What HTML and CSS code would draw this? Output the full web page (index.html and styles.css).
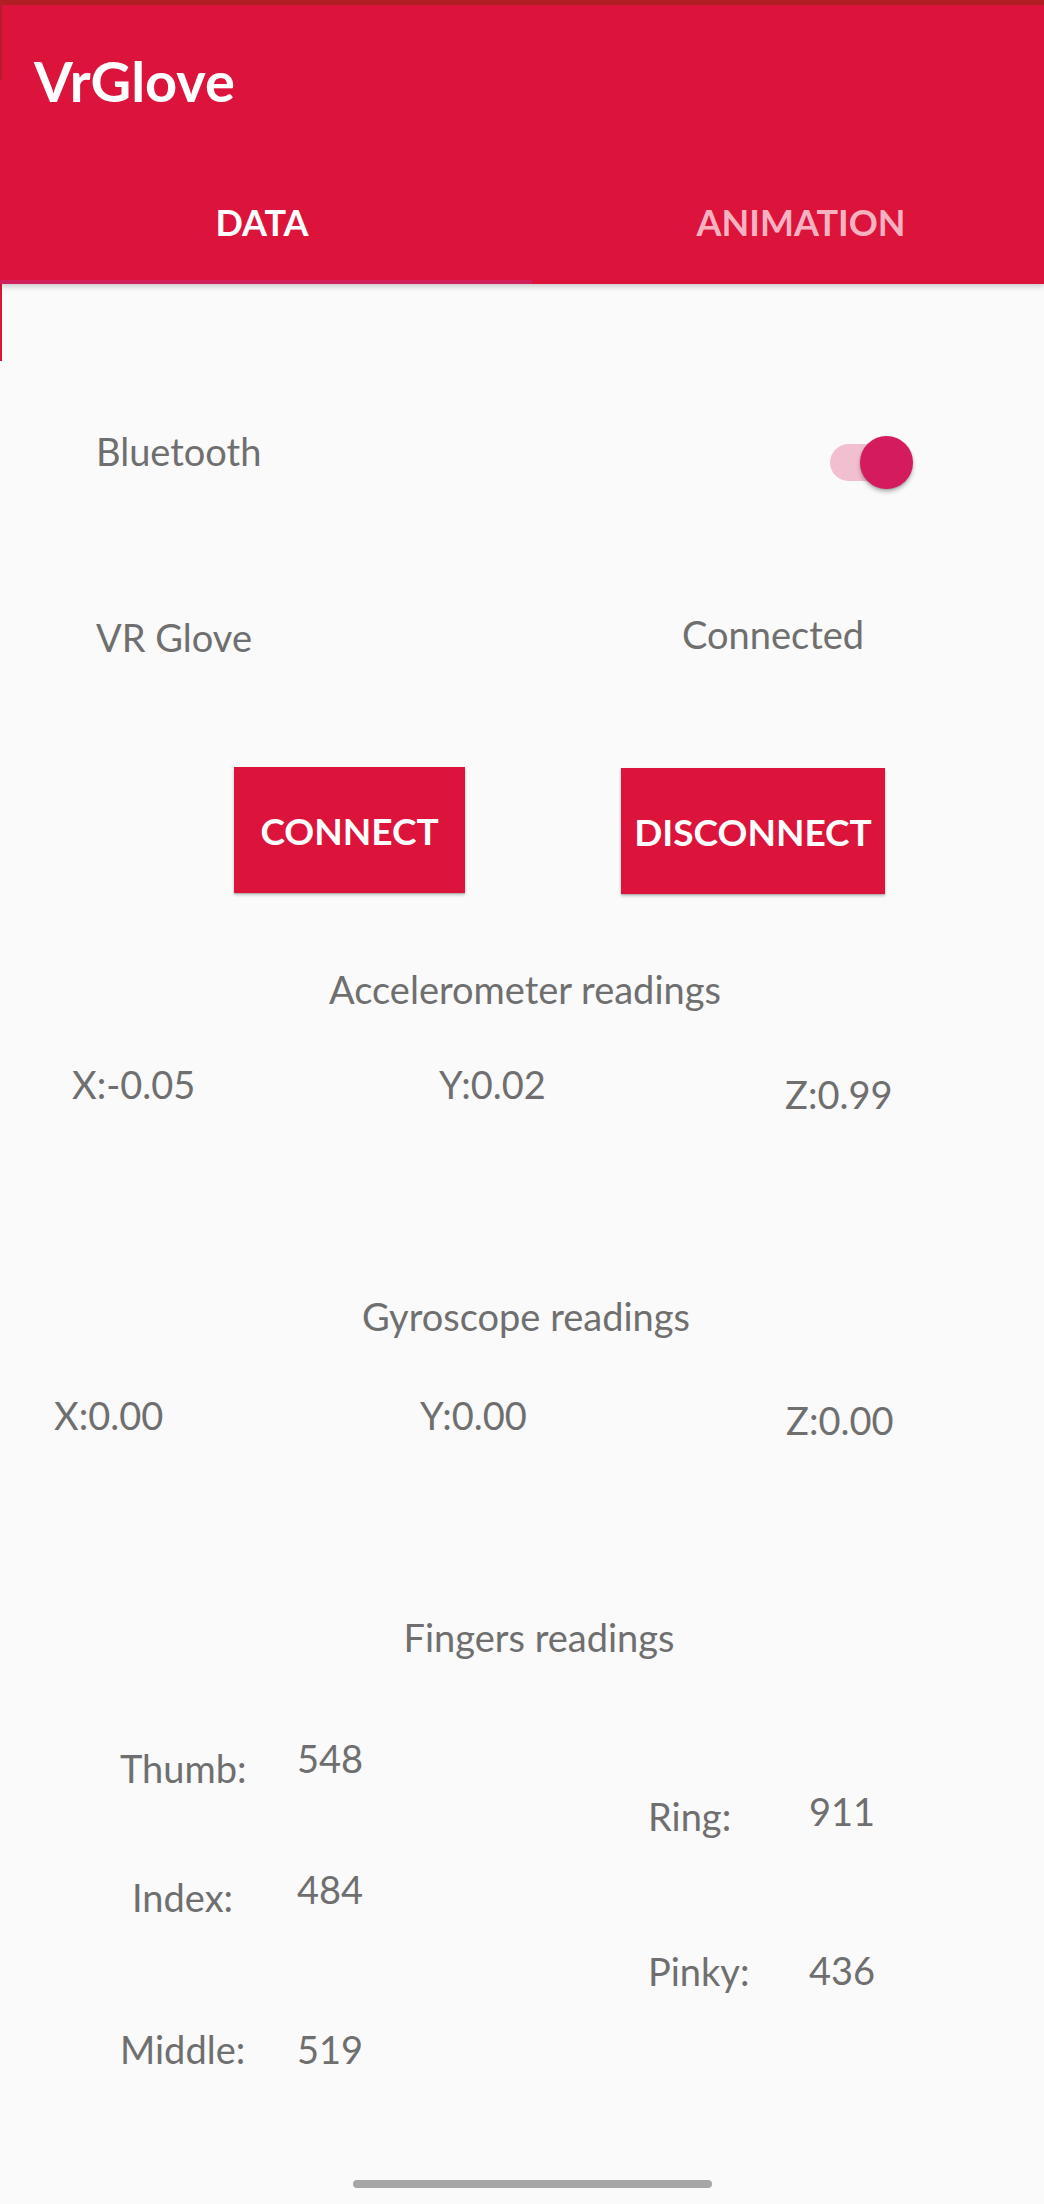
FILE: index.html
```html
<!DOCTYPE html>
<html lang="en">
<head>
<meta charset="utf-8">
<title>VrGlove</title>
<link rel="stylesheet" href="styles.css">
</head>
<body>
<div class="screen">
  <header class="appbar">
    <div class="title">VrGlove</div>
    <nav class="tabs">
      <div class="tab tab--active">DATA</div>
      <div class="tab tab--secondary">ANIMATION</div>
    </nav>
  </header>

  <main class="content">
    <div class="row row--bt">
      <span class="label">Bluetooth</span>
      <span class="switch">
        <span class="switch-track"></span>
        <span class="switch-thumb"></span>
      </span>
    </div>

    <div class="row row--glove">
      <span class="label label--glove">VR Glove</span>
      <span class="label label--status">Connected</span>
    </div>

    <div class="buttons">
      <button class="btn btn--connect">CONNECT</button>
      <button class="btn btn--disconnect">DISCONNECT</button>
    </div>

    <div class="section-title section-title--accel">Accelerometer readings</div>
    <div class="axes axes--accel">
      <span class="label">X:-0.05</span>
      <span class="label">Y:0.02</span>
      <span class="label axis-z">Z:0.99</span>
    </div>

    <div class="section-title section-title--gyro">Gyroscope readings</div>
    <div class="axes axes--gyro">
      <span class="label">X:0.00</span>
      <span class="label">Y:0.00</span>
      <span class="label axis-z">Z:0.00</span>
    </div>

    <div class="section-title section-title--fingers">Fingers readings</div>
    <div class="fingers">
      <div class="finger-col finger-col--left">
        <div class="pair pair--thumb">
          <span class="label fname">Thumb:</span>
          <span class="label fval">548</span>
        </div>
        <div class="pair pair--index">
          <span class="label fname">Index:</span>
          <span class="label fval">484</span>
        </div>
        <div class="pair pair--middle">
          <span class="label fname">Middle:</span>
          <span class="label fval">519</span>
        </div>
      </div>
      <div class="finger-col finger-col--right">
        <div class="pair pair--ring">
          <span class="label fname">Ring:</span>
          <span class="label fval">911</span>
        </div>
        <div class="pair pair--pinky">
          <span class="label fname">Pinky:</span>
          <span class="label fval">436</span>
        </div>
      </div>
    </div>

    <div class="home-bar"></div>
  </main>
</div>
</body>
</html>
```

FILE: styles.css
```css
* { box-sizing: border-box; }

html, body {
  margin: 0;
  padding: 0;
  background: #fafafa;
}

body {
  font-family: Lato, "Open Sans", "Noto Sans", sans-serif;
  width: 1044px;
  height: 2204px;
  overflow: hidden;
}

.screen {
  width: 1044px;
  min-height: 2204px;
  background: #fafafa;
}

/* ---------- App bar ---------- */
.appbar {
  position: relative;
  background: #dc143c;
  border-top: 5px solid #b11f24;
  box-shadow: 0 2px 6px rgba(0, 0, 0, 0.22);
  z-index: 1;
}

.appbar::before {
  content: "";
  position: absolute;
  left: 0;
  top: 0;
  width: 2px;
  height: 75px;
  background: #b81a2c;
}

.title {
  padding: 44px 0 0 34px;
  height: 108px;
  font-size: 56px;
  line-height: 64px;
  font-weight: 700;
  color: #ffffff;
}

.tabs {
  display: flex;
  height: 171px;
}

.tab {
  padding-top: 87px;
  font-size: 36px;
  line-height: 44px;
  font-weight: 700;
  text-align: center;
  color: rgba(255, 255, 255, 0.7);
}

.tab--active {
  flex: 0 0 532px;
  padding-right: 8px;
  color: #ffffff;
  border-bottom: 4px solid #d01f5c;
}

.tab--secondary {
  flex: 1;
  padding-left: 26px;
  color: #f7b2c1;
}

/* ---------- Content ---------- */
.content {
  position: relative;
  display: flow-root;
  padding-bottom: 20px;
}

.content::before {
  content: "";
  position: absolute;
  left: 0;
  top: 0;
  width: 2px;
  height: 77px;
  background: #dc143c;
}

.label {
  font-size: 38px;
  line-height: 44px;
  color: #6f6f6f;
  white-space: nowrap;
}

.row {
  display: flex;
  align-items: flex-start;
}

.row--bt {
  margin-top: 145px;
  padding-left: 96px;
  padding-right: 131px;
  justify-content: space-between;
}

.switch {
  position: relative;
  display: block;
  width: 83px;
  height: 52px;
  margin-top: 7px;
}

.switch-track {
  display: block;
  width: 76px;
  height: 37px;
  margin-top: 8px;
  border-radius: 19px;
  background: #f2bfd1;
}

.switch-thumb {
  position: absolute;
  right: 0;
  top: 0;
  width: 53px;
  height: 53px;
  border-radius: 50%;
  background: #d41b5e;
  box-shadow: 0 3px 4px rgba(0, 0, 0, 0.25), 0 1px 2px rgba(0, 0, 0, 0.15);
}

.row--glove {
  display: grid;
  grid-template-columns: 586px 1fr;
  margin-top: 124px;
  padding-left: 96px;
}

.label--glove {
  margin-top: 3px;
}

/* ---------- Buttons ---------- */
.buttons {
  display: flex;
  align-items: flex-start;
  gap: 156px;
  margin-top: 108px;
  padding-left: 234px;
}

.btn {
  height: 126px;
  border: none;
  border-radius: 0;
  background: #dc143c;
  color: #ffffff;
  font-family: Lato, "Open Sans", sans-serif;
  font-size: 37px;
  font-weight: 700;
  padding: 0;
  box-shadow: 0 2px 3px rgba(0, 0, 0, 0.22), 0 1px 1px rgba(0, 0, 0, 0.12);
}

.btn--connect { width: 231px; }
.btn--disconnect { width: 264px; margin-top: 1px; }

/* ---------- Sections ---------- */
.section-title {
  font-size: 38px;
  line-height: 44px;
  color: #6f6f6f;
  text-align: center;
}

.section-title--accel {
  margin-top: 73px;
  padding-left: 6px;
}

.section-title--gyro {
  margin-top: 178px;
  padding-left: 8px;
}

.section-title--fingers {
  margin-top: 173px;
  padding-left: 34px;
}

.axes {
  display: grid;
  align-items: start;
}

.axes--accel {
  margin-top: 51px;
  padding-left: 72px;
  grid-template-columns: 367px 346px auto;
}

.axes--accel .axis-z { margin-top: 10px; }

.axes--gyro {
  margin-top: 55px;
  padding-left: 54px;
  grid-template-columns: 366px 366px auto;
}

.axes--gyro .axis-z { margin-top: 5px; }

/* ---------- Fingers ---------- */
.fingers {
  display: grid;
  grid-template-columns: 520px 1fr;
}

.finger-col {
  display: flex;
  flex-direction: column;
}

.finger-col--left { padding-left: 120px; }
.finger-col--right { padding-left: 128px; }

.pair {
  display: flex;
  align-items: flex-start;
}

.finger-col--left .fname { width: 177px; }
.finger-col--right .fname { width: 161px; }

.pair--thumb { margin-top: 77px; }
.pair--thumb .fname { margin-top: 10px; }

.pair--index { margin-top: 77px; }
.pair--index .fname { margin-top: 8px; padding-left: 12px; }

.pair--middle { margin-top: 108px; }

.pair--ring { margin-top: 130px; }
.pair--ring .fname { margin-top: 5px; }

.pair--pinky { margin-top: 110px; }
.pair--pinky .fname { margin-top: 1px; }

.home-bar {
  margin-top: 109px;
  margin-left: 353px;
  width: 359px;
  height: 8px;
  border-radius: 4px;
  background: #a6a6a6;
}
```
